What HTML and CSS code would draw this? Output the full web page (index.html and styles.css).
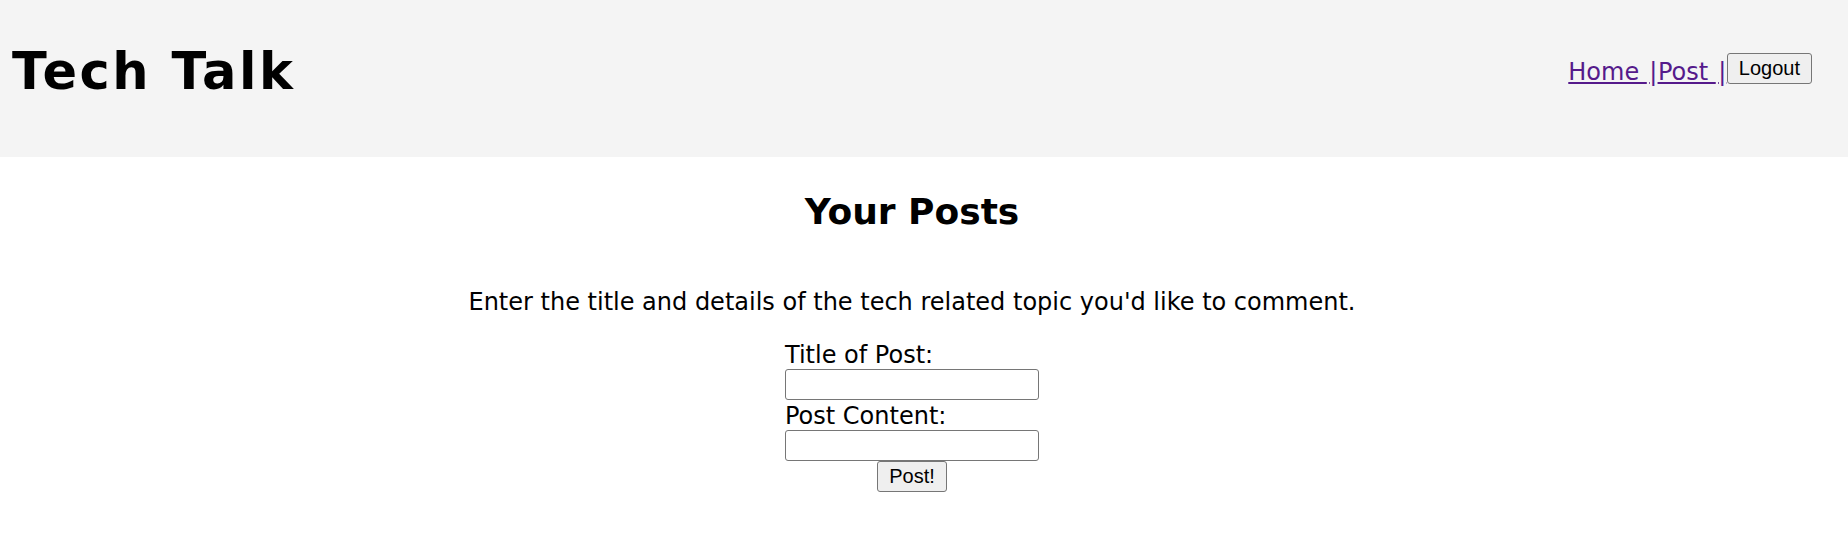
FILE: index.html
```html
<!DOCTYPE html>
<html lang="en">
<head>
<meta charset="utf-8">
<title>Tech Talk</title>
<link rel="stylesheet" href="styles.css">
</head>
<body>
<header class="site-header">
  <h1 class="brand">Tech Talk</h1>
  <nav class="nav"><a class="nav-link" href="#">Home </a><a class="nav-link" href="#"><span class="sep">|</span>Post </a><a class="nav-link" href="#"><span class="sep">|</span></a><button class="btn" type="button">Logout</button></nav>
</header>
<main class="main">
  <h2 class="page-title">Your Posts</h2>
  <p class="intro">Enter the title and details of the tech related topic you'd like to comment.</p>
  <form class="post-form">
    <div class="fields">
      <label class="field-label" for="title">Title of Post:</label>
      <input class="field-input" id="title" type="text">
      <label class="field-label" for="content">Post Content:</label>
      <input class="field-input" id="content" type="text">
    </div>
    <button class="btn" type="submit">Post!</button>
  </form>
</main>
</body>
</html>
```
FILE: styles.css
```css
html, body {
  margin: 0;
  padding: 0;
  background: #ffffff;
}

body {
  font-family: "DejaVu Sans", Verdana, sans-serif;
  color: #000000;
}

.site-header {
  display: flex;
  justify-content: space-between;
  align-items: flex-start;
  height: 157px;
  box-sizing: border-box;
  padding: 42px 36px 0 12px;
  background: #f4f4f4;
}

.brand {
  margin: 0;
  font-size: 51px;
  font-weight: 700;
  letter-spacing: 2.5px;
  line-height: normal;
}

.nav {
  display: flex;
  align-items: flex-start;
  margin-top: 11px;
}

.nav-link {
  margin-top: 5px;
  font-size: 24px;
  line-height: normal;
  color: #551a8b;
  text-decoration: underline;
  white-space: pre;
}

.sep {
  padding: 0 0.5px 0 2.5px;
}

.btn {
  margin: 0;
  padding: 3px 11px;
  font-family: "Liberation Sans", Arial, sans-serif;
  font-size: 20px;
  line-height: normal;
  color: #000000;
  background: #efefef;
  border: 1px solid #767676;
  border-radius: 3px;
}

.main {
  padding-right: 24px;
  text-align: center;
}

.page-title {
  margin: 34px 0 56px;
  font-size: 36px;
  font-weight: 700;
  line-height: normal;
}

.intro {
  margin: 0 0 23px;
  font-size: 24px;
  line-height: normal;
}

.post-form {
  display: flex;
  flex-direction: column;
  align-items: center;
}

.fields {
  display: flex;
  flex-direction: column;
  align-items: flex-start;
  text-align: left;
}

.field-label {
  display: block;
  padding-top: 2px;
  font-size: 24px;
  line-height: 28px;
}

.field-input {
  display: block;
  width: 254px;
  height: 31px;
  box-sizing: border-box;
  margin: 0;
  border: 1px solid #767676;
  border-radius: 3px;
  background: #ffffff;
}
```
